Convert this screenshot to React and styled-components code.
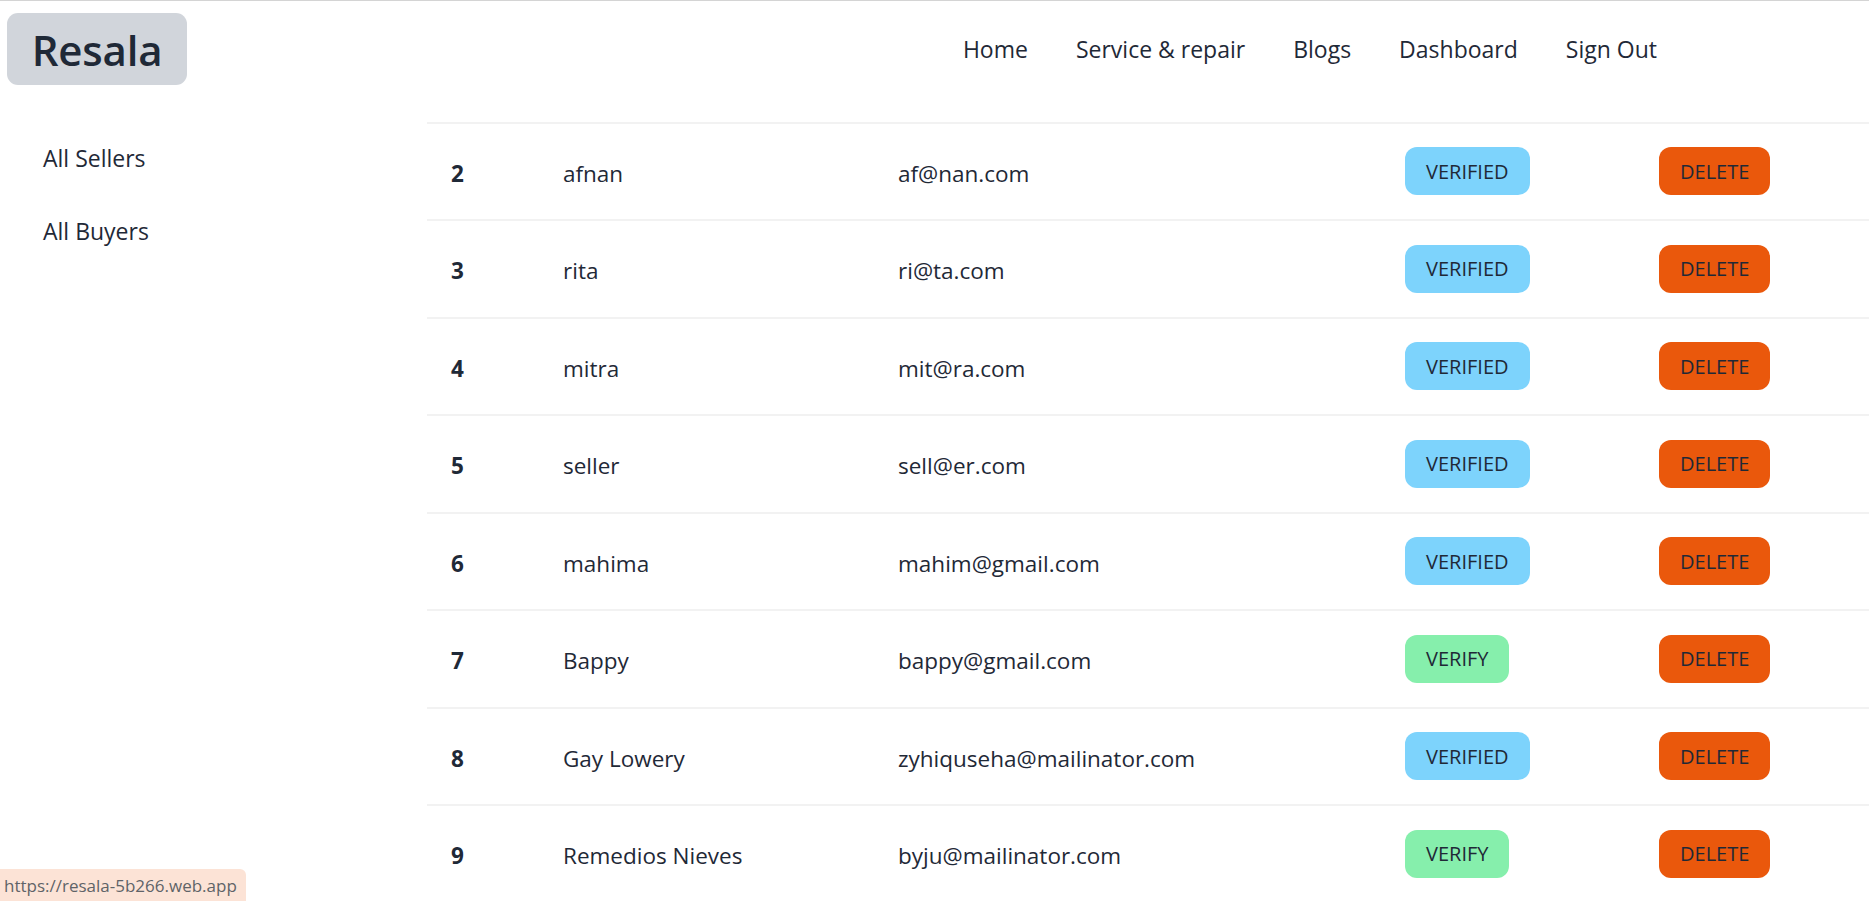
import React, { useLayoutEffect, useRef } from "react";
import styled, { createGlobalStyle } from "styled-components";

const Global = createGlobalStyle`
  html, body { margin: 0; padding: 0; height: 100%; overflow: hidden; background: #fff; }
  body { font-family: "Open Sans", "Noto Sans", sans-serif; color: #1f2937; }
  * { box-sizing: border-box; }
`;

const Page = styled.div`
  height: 100vh;
  display: flex;
  flex-direction: column;
  border-top: 1px solid #d4d4d4;
`;

const Header = styled.header`
  height: 96px;
  flex: none;
  display: flex;
  align-items: center;
  padding: 0 0 0 7px;
`;

const Logo = styled.a`
  height: 72px;
  width: 180px;
  display: flex;
  align-items: center;
  justify-content: center;
  background: #d1d5db;
  border-radius: 11px;
  font-size: 42px;
  font-weight: 600;
  color: #1f2937;
  text-decoration: none;
  letter-spacing: -0.2px;
`;

const Spacer = styled.div`
  flex: 1;
`;

const Nav = styled.nav`
  display: flex;
  align-items: center;
  margin-right: 188px;
`;

const NavLink = styled.a`
  padding: 0 24px;
  font-size: 23px;
  line-height: 36px;
  color: #1f2937;
  text-decoration: none;
  white-space: nowrap;
`;

const Body = styled.div`
  flex: 1;
  min-height: 0;
  display: flex;
`;

const Sidebar = styled.aside`
  width: 427px;
  flex: none;
  padding: 25px 19px;
  display: flex;
  flex-direction: column;
`;

const MenuItem = styled.a`
  padding: 18px 24px;
  font-size: 23px;
  line-height: 37px;
  color: #1f2937;
  text-decoration: none;
`;

const Content = styled.main`
  flex: 1;
  min-width: 0;
  overflow-y: auto;
  &::-webkit-scrollbar { width: 5px; }
  &::-webkit-scrollbar-track { background: #f1f1f1; }
  &::-webkit-scrollbar-thumb { background: #c1c1c1; }
`;

const Title = styled.h2`
  margin: 0;
  padding: 40px 24px;
  font-size: 34px;
  line-height: 50px;
  font-weight: 600;
`;

const Table = styled.table`
  width: 100%;
  border-collapse: collapse;
  table-layout: fixed;
  margin-bottom: 6px;
`;

const Th = styled.th`
  text-align: left;
  padding: 24px;
  font-size: 17px;
  line-height: 27px;
  font-weight: 700;
  text-transform: uppercase;
  color: #4b5563;
  background: #f3f4f6;
`;

const Row = styled.tr`
  height: 97.5px;
  border-bottom: 2px solid #f2f2f2;
`;

const Td = styled.td`
  padding: ${(p) => (p.$action ? "0 24px" : "4px 24px 0")};
  font-size: 22.5px;
  line-height: 33px;
  font-weight: ${(p) => (p.$bold ? 700 : 400)};
  vertical-align: middle;
  white-space: nowrap;
`;

const Btn = styled.button`
  height: 48px;
  padding: 0 21px;
  border: none;
  border-radius: 12px;
  font-family: "Open Sans", "Noto Sans", sans-serif;
  font-size: 20px;
  font-weight: 500;
  color: #1f2937;
  text-transform: uppercase;
  cursor: pointer;
  background: ${(p) =>
    p.$kind === "verified" ? "#7dd3fc" : p.$kind === "verify" ? "#86efac" : "#ea580c"};
`;

const StatusBar = styled.div`
  position: fixed;
  left: 0;
  bottom: 0;
  width: 246px;
  height: 32px;
  padding: 0 4px;
  display: flex;
  align-items: center;
  background: #fce3d6;
  border-top-right-radius: 6px;
  font-size: 17px;
  color: #5f6368;
  white-space: nowrap;
`;

const sellers = [
  { id: 1, name: "admin", email: "admin@resala.com", verified: true },
  { id: 2, name: "afnan", email: "af@nan.com", verified: true },
  { id: 3, name: "rita", email: "ri@ta.com", verified: true },
  { id: 4, name: "mitra", email: "mit@ra.com", verified: true },
  { id: 5, name: "seller", email: "sell@er.com", verified: true },
  { id: 6, name: "mahima", email: "mahim@gmail.com", verified: true },
  { id: 7, name: "Bappy", email: "bappy@gmail.com", verified: false },
  { id: 8, name: "Gay Lowery", email: "zyhiquseha@mailinator.com", verified: true },
  { id: 9, name: "Remedios Nieves", email: "byju@mailinator.com", verified: false },
];

export default function App() {
  const ref = useRef(null);
  const firstRow = useRef(null);
  useLayoutEffect(() => {
    const el = ref.current;
    const row = firstRow.current;
    if (el && row) {
      el.scrollTop = 0;
      const delta = row.getBoundingClientRect().bottom - 123;
      el.scrollTop = delta;
    }
  }, []);
  return (
    <>
      <Global />
      <Page>
        <Header>
          <Logo href="#">Resala</Logo>
          <Spacer />
          <Nav>
            <NavLink href="#">Home</NavLink>
            <NavLink href="#">Service &amp; repair</NavLink>
            <NavLink href="#">Blogs</NavLink>
            <NavLink href="#">Dashboard</NavLink>
            <NavLink href="#">Sign Out</NavLink>
          </Nav>
        </Header>
        <Body>
          <Sidebar>
            <MenuItem href="#">All Sellers</MenuItem>
            <MenuItem href="#">All Buyers</MenuItem>
          </Sidebar>
          <Content ref={ref}>
            <Title>All Sellers</Title>
            <Table>
              <colgroup>
                <col style={{ width: 112 }} />
                <col style={{ width: 335 }} />
                <col style={{ width: 507 }} />
                <col style={{ width: 254 }} />
                <col />
              </colgroup>
              <thead>
                <tr>
                  <Th></Th>
                  <Th>Name</Th>
                  <Th>Email</Th>
                  <Th>Verify</Th>
                  <Th>Delete</Th>
                </tr>
              </thead>
              <tbody>
                {sellers.map((s, i) => (
                  <Row key={s.id} ref={i === 0 ? firstRow : undefined}>
                    <Td $bold>{s.id}</Td>
                    <Td>{s.name}</Td>
                    <Td>{s.email}</Td>
                    <Td $action>
                      <Btn $kind={s.verified ? "verified" : "verify"}>
                        {s.verified ? "Verified" : "Verify"}
                      </Btn>
                    </Td>
                    <Td $action>
                      <Btn $kind="delete">Delete</Btn>
                    </Td>
                  </Row>
                ))}
              </tbody>
            </Table>
          </Content>
        </Body>
      </Page>
      <StatusBar>https://resala-5b266.web.app</StatusBar>
    </>
  );
}
